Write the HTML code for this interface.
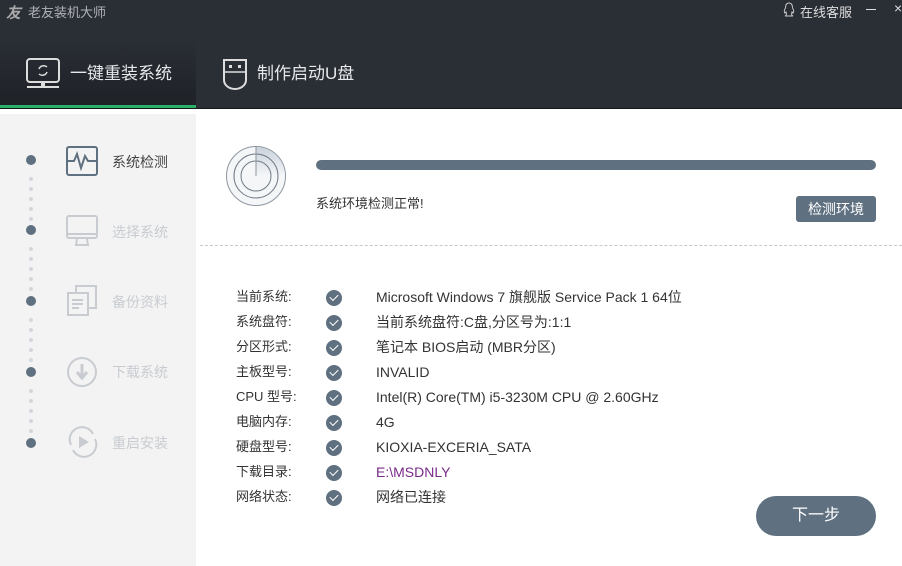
<!DOCTYPE html>
<html><head><meta charset="utf-8"><style>
*{margin:0;padding:0;box-sizing:border-box}
body{width:902px;height:566px;overflow:hidden;background:#fff;font-family:"Liberation Sans","Noto Sans CJK SC",sans-serif;position:relative}
.hdr{position:absolute;left:0;top:0;width:902px;height:109px;background:#2a2e35;border-bottom:1px solid #15171a}
.tab1{position:absolute;left:0;top:40px;width:196px;height:68px;background:linear-gradient(#2a2e35,#1e2126)}
.green{position:absolute;left:0;top:105px;width:196px;height:3px;background:#2bae68}
.t{position:absolute;color:#e6e8ea}
.side{position:absolute;left:0;top:114px;width:196px;height:452px;background:#f3f3f3}
.dot{position:absolute;left:26px;width:10px;height:10px;border-radius:50%;background:#5f7080}
.sd{position:absolute;left:29px;width:4px;height:4px;border-radius:50%;background:#d3d7dc}
.st{position:absolute;left:112px;font-size:14px;color:#c8ccd1}
.lbl{position:absolute;left:236px;font-size:13px;color:#333;line-height:18px}
.chk{position:absolute;left:326px;width:16px;height:16px;border-radius:50%;background:#5f7080}
.chk::after{content:"";position:absolute;left:4px;top:4px;width:7px;height:4px;border-left:1.5px solid #fff;border-bottom:1.5px solid #fff;transform:rotate(-45deg)}
.val{position:absolute;left:376px;font-size:14px;color:#333;line-height:18px}
</style></head><body>
<div class="hdr"></div>
<div class="tab1"></div>
<div class="green"></div>
<div class="t" style="left:6px;top:2px;font-size:15px;font-style:italic;font-weight:bold;color:#aaa">友</div>
<div class="t" style="left:28px;top:2px;font-size:13px;color:#b0b4b8">老友装机大师</div>
<svg style="position:absolute;left:782px;top:2px" width="14" height="15" viewBox="0 0 14 15"><path d="M7 1C4 1 3.5 4 3.5 6 2 8 2 10 3 11L4 10C4.5 12 5 13 3 14H11C9 13 9.5 12 10 10L11 11C12 10 12 8 10.5 6 10.5 4 10 1 7 1Z" fill="none" stroke="#ccc" stroke-width="1"/></svg>
<div class="t" style="left:800px;top:2px;font-size:13px;color:#ddd">在线客服</div>
<div style="position:absolute;left:866px;top:9px;width:10px;height:1px;background:#ddd"></div>
<div class="t" style="left:894px;top:0px;font-size:14px;color:#ddd">×</div>
<svg style="position:absolute;left:26px;top:58px" width="36" height="32" viewBox="0 0 36 32"><rect x="1" y="1" width="32" height="23" rx="3" fill="none" stroke="#ddd" stroke-width="2"/><path d="M13 11a5 5 0 0 1 8-2M21 14a5 5 0 0 1-8 2" fill="none" stroke="#ddd" stroke-width="1.5"/><rect x="15" y="25" width="4" height="3" fill="#ddd"/><rect x="1" y="28" width="32" height="2" fill="#ddd"/></svg>
<div class="t" style="left:70px;top:59px;font-size:17px">一键重装系统</div>
<svg style="position:absolute;left:222px;top:58px" width="26" height="32" viewBox="0 0 26 32"><path d="M2 2H24V22A11 9 0 0 1 2 22Z" fill="none" stroke="#ddd" stroke-width="2"/><rect x="7" y="7" width="3" height="3" fill="#ddd"/><rect x="16" y="7" width="3" height="3" fill="#ddd"/><line x1="2" y1="14" x2="24" y2="14" stroke="#ddd" stroke-width="1.5"/></svg>
<div class="t" style="left:257px;top:59px;font-size:17px">制作启动U盘</div>
<div class="side"></div>
<div class="dot" style="top:155px"></div><div class="dot" style="top:225px"></div><div class="dot" style="top:296px"></div><div class="dot" style="top:367px"></div><div class="dot" style="top:438px"></div>
<div class="sd" style="top:177px"></div><div class="sd" style="top:187px"></div><div class="sd" style="top:197px"></div><div class="sd" style="top:207px"></div><div class="sd" style="top:217px"></div>
<div class="sd" style="top:247px"></div><div class="sd" style="top:257px"></div><div class="sd" style="top:267px"></div><div class="sd" style="top:277px"></div><div class="sd" style="top:287px"></div>
<div class="sd" style="top:318px"></div><div class="sd" style="top:328px"></div><div class="sd" style="top:338px"></div><div class="sd" style="top:348px"></div><div class="sd" style="top:358px"></div>
<div class="sd" style="top:389px"></div><div class="sd" style="top:399px"></div><div class="sd" style="top:409px"></div><div class="sd" style="top:419px"></div><div class="sd" style="top:429px"></div>
<svg style="position:absolute;left:66px;top:146px" width="32" height="30" viewBox="0 0 32 30"><rect x="1" y="1" width="30" height="28" rx="2" fill="none" stroke="#5f7080" stroke-width="2"/><path d="M1 15H8L11 8 15 22 19 10 22 15H31" fill="none" stroke="#5f7080" stroke-width="2"/></svg>
<div class="st" style="top:152px;color:#444">系统检测</div>
<svg style="position:absolute;left:66px;top:215px" width="32" height="32" viewBox="0 0 32 32"><rect x="1" y="1" width="30" height="22" rx="2" fill="none" stroke="#c8ccd1" stroke-width="2"/><line x1="1" y1="19" x2="31" y2="19" stroke="#c8ccd1" stroke-width="2"/><path d="M11 24L10 30H22L21 24" fill="none" stroke="#c8ccd1" stroke-width="2"/></svg>
<div class="st" style="top:222px">选择系统</div>
<svg style="position:absolute;left:66px;top:285px" width="32" height="32" viewBox="0 0 32 32"><rect x="10" y="1" width="20" height="22" fill="none" stroke="#c8ccd1" stroke-width="2"/><rect x="2" y="8" width="20" height="22" fill="#f3f3f3" stroke="#c8ccd1" stroke-width="2"/><path d="M6 15H17M6 19H17M6 23H13" stroke="#c8ccd1" stroke-width="2"/></svg>
<div class="st" style="top:292px">备份资料</div>
<svg style="position:absolute;left:66px;top:356px" width="32" height="32" viewBox="0 0 32 32"><circle cx="16" cy="16" r="14" fill="none" stroke="#c8ccd1" stroke-width="2"/><path d="M16 8V20M11 16L16 22 21 16" fill="none" stroke="#c8ccd1" stroke-width="3"/></svg>
<div class="st" style="top:362px">下载系统</div>
<svg style="position:absolute;left:66px;top:425px" width="34" height="34" viewBox="0 0 34 34"><path d="M5 20A12 12 0 0 1 27 9M29 14A12 12 0 0 1 7 25" fill="none" stroke="#c8ccd1" stroke-width="2"/><path d="M13 11L23 17 13 23Z" fill="#c8ccd1"/></svg>
<div class="st" style="top:433px">重启安装</div>
<svg style="position:absolute;left:225px;top:145px" width="62" height="62" viewBox="0 0 62 62"><defs><linearGradient id="g" x1="0" y1="0" x2="0" y2="1"><stop offset="0" stop-color="#c9d1da"/><stop offset="1" stop-color="#f4f6f8"/></linearGradient></defs><circle cx="31" cy="31" r="29.5" fill="#f5f6f8" stroke="#8c96a0"/><path d="M31 31V2A29 29 0 0 1 60 31Z" fill="url(#g)"/><circle cx="31" cy="31" r="22" fill="none" stroke="#707a84"/><circle cx="31" cy="31" r="15" fill="none" stroke="#707a84"/><line x1="31" y1="2" x2="31" y2="31" stroke="#8c96a0"/></svg>
<div style="position:absolute;left:316px;top:160px;width:560px;height:10px;border-radius:5px;background:#5f7080"></div>
<div style="position:absolute;left:316px;top:193px;font-size:13px;color:#333">系统环境检测正常!</div>
<div style="position:absolute;left:796px;top:196px;width:80px;height:26px;border-radius:3px;background:#5f7080;color:#fff;font-size:14px;text-align:center;line-height:26px">检测环境</div>
<div style="position:absolute;left:200px;top:245px;width:702px;border-top:1px dashed #c8c8c8"></div>
<div class="lbl" style="top:288px">当前系统:</div><div class="chk" style="top:290px"></div><div class="val" style="top:288px">Microsoft Windows 7 旗舰版 Service Pack 1 64位</div>
<div class="lbl" style="top:313px">系统盘符:</div><div class="chk" style="top:315px"></div><div class="val" style="top:313px">当前系统盘符:C盘,分区号为:1:1</div>
<div class="lbl" style="top:338px">分区形式:</div><div class="chk" style="top:340px"></div><div class="val" style="top:338px">笔记本 BIOS启动 (MBR分区)</div>
<div class="lbl" style="top:363px">主板型号:</div><div class="chk" style="top:365px"></div><div class="val" style="top:363px">INVALID</div>
<div class="lbl" style="top:388px">CPU 型号:</div><div class="chk" style="top:390px"></div><div class="val" style="top:388px">Intel(R) Core(TM) i5-3230M CPU @ 2.60GHz</div>
<div class="lbl" style="top:413px">电脑内存:</div><div class="chk" style="top:415px"></div><div class="val" style="top:413px">4G</div>
<div class="lbl" style="top:438px">硬盘型号:</div><div class="chk" style="top:440px"></div><div class="val" style="top:438px">KIOXIA-EXCERIA_SATA</div>
<div class="lbl" style="top:463px">下载目录:</div><div class="chk" style="top:465px"></div><div class="val" style="top:463px;color:#7a2a8a">E:\MSDNLY</div>
<div class="lbl" style="top:488px">网络状态:</div><div class="chk" style="top:490px"></div><div class="val" style="top:488px">网络已连接</div>
<div style="position:absolute;left:756px;top:496px;width:120px;height:40px;border-radius:20px;background:#5f7080;color:#fff;font-size:16px;text-align:center;line-height:40px">下一步</div>
</body></html>
